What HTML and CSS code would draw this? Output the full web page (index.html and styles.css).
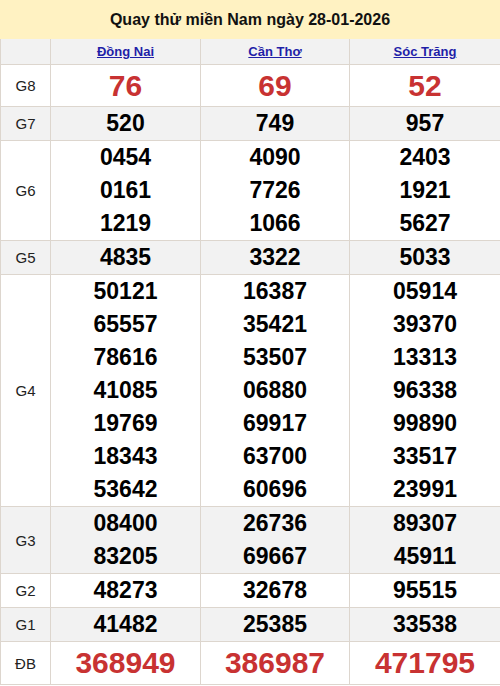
FILE: index.html
```html
<!DOCTYPE html>
<html lang="vi">
<head>
<meta charset="utf-8">
<link rel="stylesheet" href="styles.css">
</head>
<body>
<div class="box">
  <div class="title">Quay thử miền Nam ngày 28-01-2026</div>
  <table class="kq">
    <colgroup><col class="c0"><col class="c1"><col class="c2"><col class="c3"></colgroup>
    <tr class="head alt">
      <th></th>
      <th><a href="#">Đồng Nai</a></th>
      <th><a href="#">Cần Thơ</a></th>
      <th><a href="#">Sóc Trăng</a></th>
    </tr>
    <tr class="g8">
      <td class="lbl">G8</td>
      <td><div class="n big">76</div></td>
      <td><div class="n big">69</div></td>
      <td><div class="n big">52</div></td>
    </tr>
    <tr class="alt">
      <td class="lbl">G7</td>
      <td><div class="n">520</div></td>
      <td><div class="n">749</div></td>
      <td><div class="n">957</div></td>
    </tr>
    <tr>
      <td class="lbl">G6</td>
      <td><div class="n">0454</div><div class="n">0161</div><div class="n">1219</div></td>
      <td><div class="n">4090</div><div class="n">7726</div><div class="n">1066</div></td>
      <td><div class="n">2403</div><div class="n">1921</div><div class="n">5627</div></td>
    </tr>
    <tr class="alt">
      <td class="lbl">G5</td>
      <td><div class="n">4835</div></td>
      <td><div class="n">3322</div></td>
      <td><div class="n">5033</div></td>
    </tr>
    <tr>
      <td class="lbl">G4</td>
      <td><div class="n">50121</div><div class="n">65557</div><div class="n">78616</div><div class="n">41085</div><div class="n">19769</div><div class="n">18343</div><div class="n">53642</div></td>
      <td><div class="n">16387</div><div class="n">35421</div><div class="n">53507</div><div class="n">06880</div><div class="n">69917</div><div class="n">63700</div><div class="n">60696</div></td>
      <td><div class="n">05914</div><div class="n">39370</div><div class="n">13313</div><div class="n">96338</div><div class="n">99890</div><div class="n">33517</div><div class="n">23991</div></td>
    </tr>
    <tr class="alt">
      <td class="lbl">G3</td>
      <td><div class="n">08400</div><div class="n">83205</div></td>
      <td><div class="n">26736</div><div class="n">69667</div></td>
      <td><div class="n">89307</div><div class="n">45911</div></td>
    </tr>
    <tr>
      <td class="lbl">G2</td>
      <td><div class="n">48273</div></td>
      <td><div class="n">32678</div></td>
      <td><div class="n">95515</div></td>
    </tr>
    <tr class="alt">
      <td class="lbl">G1</td>
      <td><div class="n">41482</div></td>
      <td><div class="n">25385</div></td>
      <td><div class="n">33538</div></td>
    </tr>
    <tr class="db">
      <td class="lbl">ĐB</td>
      <td><div class="n big db-n">368949</div></td>
      <td><div class="n big db-n">386987</div></td>
      <td><div class="n big db-n">471795</div></td>
    </tr>
  </table>
</div>
</body>
</html>
```

FILE: styles.css
```css
html, body {
  margin: 0;
  padding: 0;
  background: #fff;
}
body {
  font-family: "Liberation Sans", Arial, sans-serif;
  color: #000;
}
.box {
  width: 500px;
}
.title {
  height: 39px;
  line-height: 39px;
  background: #fff2c2;
  text-align: center;
  font-weight: bold;
  font-size: 16px;
  color: #111;
}
.kq {
  width: 500px;
  border-collapse: collapse;
  table-layout: fixed;
}
.c0 { width: 50px; }
.c1 { width: 150px; }
.c2 { width: 149px; }
.c3 { width: 151px; }
.kq th, .kq td {
  border: 1px solid #ddd6ce;
  padding: 0;
  text-align: center;
  vertical-align: middle;
}
.kq tr:first-child th { border-top: none; }
.head th {
  height: 25px;
  font-size: 13px;
  font-weight: bold;
}
.head a {
  color: #1f1fa8;
  text-decoration: underline;
}
.alt { background: #f2f2f2; }
.lbl {
  font-size: 15px;
  color: #222;
}
.n {
  font-size: 23px;
  font-weight: bold;
  line-height: 33px;
  color: #000;
}
.big {
  font-size: 30px;
  line-height: 41px;
  color: #c83232;
}
.db-n {
  line-height: 42px;
}
```
